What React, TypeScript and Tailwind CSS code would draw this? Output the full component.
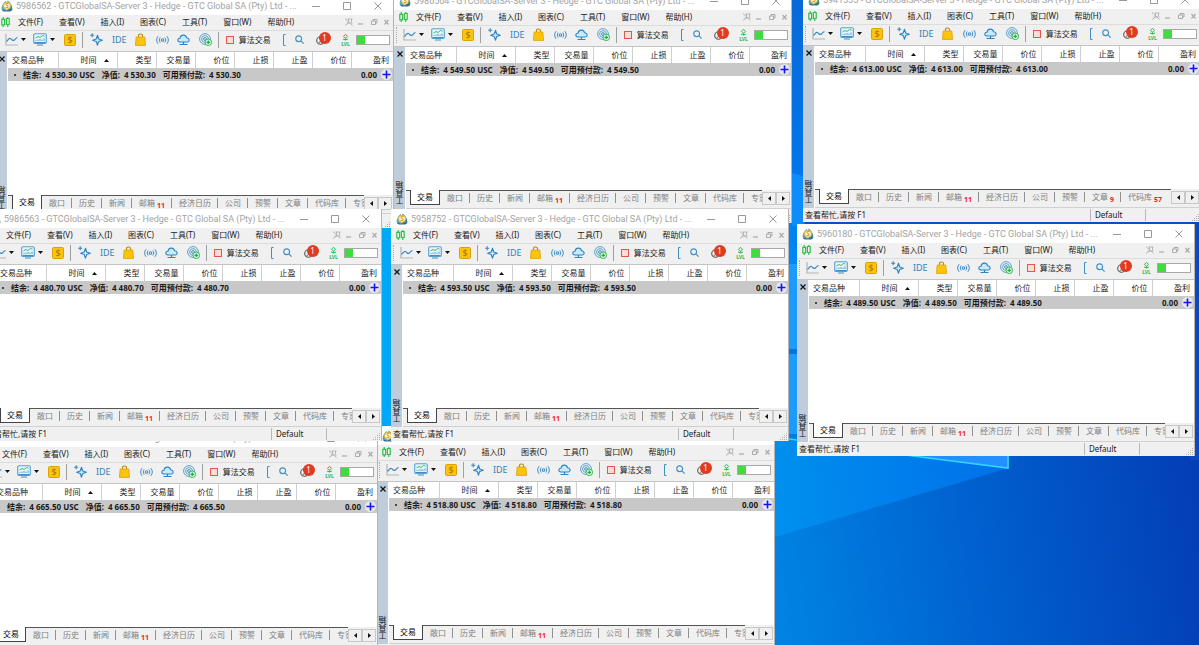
import React from "react";

type Tab = { label: string; count?: number };

type Terminal = {
  login: string;
  balance: string;
  position: string;
  tabs: Tab[];
};

const baseTabs: Tab[] = [
  { label: "敞口" },
  { label: "历史" },
  { label: "新闻" },
  { label: "邮箱", count: 11 },
  { label: "经济日历" },
  { label: "公司" },
  { label: "预警" },
  { label: "文章" },
  { label: "代码库" },
  { label: "专家" },
];

const countedTabs: Tab[] = [
  ...baseTabs.slice(0, 7),
  { label: "文章", count: 9 },
  { label: "代码库", count: 57 },
];

// listed back to front
const terminals: Terminal[] = [
  { login: "5958753", balance: "4 518.80", position: "left-[377px] top-[426px]", tabs: baseTabs },
  { login: "5986561", balance: "4 665.50", position: "left-[-20px] top-[428px]", tabs: baseTabs },
  { login: "5986562", balance: "4 530.30", position: "left-[-4px] top-[-4px]", tabs: baseTabs },
  { login: "5986564", balance: "4 549.50", position: "left-[394px] top-[-9px]", tabs: baseTabs },
  { login: "5941335", balance: "4 613.00", position: "left-[803px] top-[-10px]", tabs: countedTabs },
  { login: "5986563", balance: "4 480.70", position: "left-[-16px] top-[209px]", tabs: baseTabs },
  { login: "5958752", balance: "4 593.50", position: "left-[391px] top-[209px]", tabs: baseTabs },
  { login: "5960180", balance: "4 489.50", position: "left-[797px] top-[224px]", tabs: baseTabs },
];

const menuItems = ["文件(F)", "查看(V)", "插入(I)", "图表(C)", "工具(T)", "窗口(W)", "帮助(H)"];

const columns = [
  { label: "时间", width: "w-[59px]", sorted: true },
  { label: "类型", width: "w-[39px]" },
  { label: "交易量", width: "w-[39px]" },
  { label: "价位", width: "w-[39px]" },
  { label: "止损", width: "w-[39px]" },
  { label: "止盈", width: "w-[39px]" },
  { label: "价位", width: "w-[39px]" },
  { label: "盈利", width: "w-auto" },
];

const Wallpaper = () => (
  <svg
    className="absolute inset-0 h-full w-full"
    viewBox="0 0 1199 645"
    preserveAspectRatio="none"
    aria-hidden="true"
  >
    <defs>
      <linearGradient id="sky" x1="775" y1="560" x2="1199" y2="500" gradientUnits="userSpaceOnUse">
        <stop offset="0" stopColor="#0083e2" />
        <stop offset="0.45" stopColor="#0062d0" />
        <stop offset="1" stopColor="#043eb6" />
      </linearGradient>
      <linearGradient id="beam" x1="775" y1="500" x2="1009" y2="468" gradientUnits="userSpaceOnUse">
        <stop offset="0" stopColor="#0090ee" />
        <stop offset="1" stopColor="#0070ea" />
      </linearGradient>
      <linearGradient id="strip" x1="0" y1="0" x2="0" y2="264" gradientUnits="userSpaceOnUse">
        <stop offset="0" stopColor="#0869d8" />
        <stop offset="0.65" stopColor="#0276ea" />
        <stop offset="1" stopColor="#0088f8" />
      </linearGradient>
    </defs>
    <rect width="1199" height="645" fill="url(#sky)" />
    <path d="M775 537 1009 468 1009 440H775Z" fill="url(#beam)" />
    <rect x="789" width="16" height="264" fill="url(#strip)" />
    <path d="M792 173l11 3v50h-11Z" fill="#0d8cfb" />
    <rect x="789" y="264" width="8" height="170" fill="#1c9bff" />
    <rect x="789" y="349" width="8" height="5" fill="#0a72dc" />
    <rect x="805" y="215" width="394" height="15" fill="#0b4fc4" />
    <rect x="1190" y="215" width="9" height="245" fill="#0a49be" />
    <rect x="370" y="220" width="25" height="215" fill="#00a8f8" />
    <path d="M775 437 1008 468V440H775Z" fill="#2490ff" />
    <path d="M775 437 913 456 1008 468V440" fill="none" stroke="#2fd8ff" strokeWidth="1.6" />
  </svg>
);

const AppLogo = () => (
  <svg className="size-3 shrink-0" viewBox="0 0 12 12" aria-hidden="true">
    <path d="M5 .8C2.600 2.500.8 5.500.6 8.200c-.1 1.600.8 2.700 2.400 3L5 9.500Z" fill="#5aa9b8" />
    <path d="M6.500.6c2.500 1.400 4.700 5 4.900 7.900.1 1.900-1 2.900-3 3L6 9Z" fill="#3b8a78" />
    <path d="M1.200 9.700c3 .8 6.200.6 9.500-.8-.4 1.700-1.400 2.500-3 2.500H3.200c-1 0-1.800-.7-2-1.700Z" fill="#2f6e9a" />
    <circle cx="6" cy="5.800" r="3.500" fill="#fff7dc" stroke="#e0b13a" strokeWidth="1" />
    <text x="6" y="8.200" textAnchor="middle" fontSize="6.500" fontWeight="700" fill="#d89a1a">S</text>
  </svg>
);

const TitleBar = ({ login }: { login: string }) => (
  <header className="flex h-[19px] shrink-0 items-center bg-white pl-[5px] pr-[11px] text-[#a3a3a3]">
    <AppLogo />
    <h2 className="ml-[3px] grow truncate font-['Roboto',sans-serif] text-[9px] leading-3">
      {login} - GTCGlobalSA-Server 3 - Hedge - GTC Global SA (Pty) Ltd - ...
    </h2>
    <div className="flex gap-[23px]">
      <button aria-label="Minimize">
        <svg className="size-2" viewBox="0 0 8 8" stroke="#999" fill="none"><path d="M0 4.500H8" /></svg>
      </button>
      <button aria-label="Maximize">
        <svg className="size-2" viewBox="0 0 8 8" stroke="#999" fill="none"><path d="M.5.5h7v7h-7Z" /></svg>
      </button>
      <button aria-label="Close">
        <svg className="size-2" viewBox="0 0 8 8" stroke="#999" fill="none"><path d="M.5.5l7 7M7.500.5l-7 7" /></svg>
      </button>
    </div>
  </header>
);

const MenuBar = () => (
  <nav className="flex h-4 shrink-0 items-center border-b border-[#dcdcdc] bg-[#f0f0f0] pr-1 pb-0.5 pl-[5px]">
    <svg className="mr-2 h-2.5 w-[9px]" viewBox="0 0 9 10" fill="none" stroke="#2fc04a" strokeWidth="1.200" aria-hidden="true">
      <path d="M2.200 0v2M2.200 8v2M6.800 0v1.500M6.800 7.500V10" />
      <path d="M.8 2.300h2.800v5.500H.8ZM5.400 1.500h2.800v6H5.400Z" />
    </svg>
    <div className="flex grow gap-4">
      {menuItems.map((item) => (
        <button key={item} className="whitespace-nowrap">{item}</button>
      ))}
    </div>
    <svg className="h-2 w-11" viewBox="0 0 44 8" fill="none" stroke="#aaa" aria-hidden="true">
      <path d="M0 .5l7.500 7M2.500 1h5M3.500 1v3.500M6.500 1v3.500M1.500 5h6M0 7.500 3.500 5" strokeWidth=".8" />
      <path d="M13 6h5" strokeWidth="1.200" />
      <path d="M26.500 3h4v3.500h-4ZM28 3V1.500h4V5h-1.500" />
      <path d="M39.500 2l4 4.500M43.500 2l-4 4.500" strokeWidth="1.200" />
    </svg>
  </nav>
);

const Caret = () => (
  <svg className="h-[3px] w-[5px]" viewBox="0 0 5 3" aria-hidden="true"><path d="M0 0h5L2.500 3Z" fill="#111" /></svg>
);

const Toolbar = () => (
  <div className="flex h-[21px] shrink-0 items-center border-b border-[#c4c4c4] bg-[#f0f0f0] pb-[3px] pl-0.5">
    <div className="h-4 border-l border-dotted border-[#aaa]" />
    <button aria-label="Chart type" className="ml-1.5 flex items-center gap-[3px]">
      <svg className="h-3 w-[13px]" viewBox="0 0 13 12" fill="none">
        <path d="M1 0v11h12" stroke="#b4b4b4" strokeWidth="1.200" />
        <path d="M1.500 7.500C3 6 4 3.500 5.500 4.500S8 7.500 9.500 6s1.500-2 3-2.500" stroke="#3f8fc6" strokeWidth="1.200" />
      </svg>
      <Caret />
    </button>
    <button aria-label="Indicators" className="ml-[7px] flex items-center gap-[3px]">
      <svg className="h-[13px] w-3.5" viewBox="0 0 14 13" fill="none">
        <rect x=".7" y=".7" width="12.600" height="9.800" rx="1.200" fill="#e3f4fc" stroke="#5aa0cc" strokeWidth="1.100" />
        <path d="M1.500 9.500h11M4 12h6" stroke="#3f8fc6" strokeWidth="1.200" />
        <path d="M2.500 5 5 3.500l2 1 2.500-2 2 .6" stroke="#35b35b" strokeWidth=".9" />
        <path d="M3 8V7M5 8V6.500M7 8V6M9 8V6.500M11 8V5.500" stroke="#3f8fc6" strokeWidth=".8" />
      </svg>
      <Caret />
    </button>
    <button aria-label="New order" className="ml-[9px]">
      <svg className="size-3" viewBox="0 0 12 12" fill="none">
        <rect x=".5" y=".5" width="11" height="11" rx="1" fill="#fdc40c" stroke="#dba106" />
        <text x="6" y="9.200" textAnchor="middle" fontSize="9" fill="#9f7305">$</text>
      </svg>
    </button>
    <div className="ml-1.5 h-4 w-px bg-[#a0a0a0]" />
    <button aria-label="Assistant" className="ml-[7px]">
      <svg className="size-[13px]" viewBox="0 0 13 13" fill="none" stroke="#2f84c2">
        <path d="M7.500 2.200 8.700 6l3.700 1.200-3.700 1.300-1.200 3.700-1.300-3.700L2.600 7.200 6.200 6Z" fill="#c8ebfb" strokeWidth="1.100" strokeLinejoin="round" />
        <path d="M2.200.2v4M.2 2.200h4" strokeWidth="1.100" />
      </svg>
    </button>
    <button className="ml-[9px] text-[9px] leading-3 text-[#3182bd]">IDE</button>
    <button aria-label="Market" className="ml-2">
      <svg className="h-[13px] w-[11px]" viewBox="0 0 11 13" fill="none">
        <path d="M3.500 5V2.500C3.500.4 7.500.4 7.500 2.500V5" stroke="#b98a10" strokeWidth="1.100" />
        <path d="M1.200 4h8.600l.8 8.400H.4Z" fill="#fdc40c" stroke="#dba106" strokeWidth=".8" />
      </svg>
    </button>
    <button aria-label="Signals" className="ml-2.5">
      <svg className="h-3 w-[13px]" viewBox="0 0 13 12" fill="none" stroke="#3f8fc6">
        <circle cx="6.500" cy="6" r="1.300" strokeWidth="1.100" />
        <path d="M4.200 3.500c-1.200 1.400-1.200 3.600 0 5M8.800 3.500c1.200 1.400 1.200 3.600 0 5M2.200 2.200C.2 4.300.2 7.700 2.200 9.800M10.800 2.200c2 2.100 2 5.500 0 7.600" />
      </svg>
    </button>
    <button aria-label="VPS" className="ml-2">
      <svg className="h-3 w-[13px]" viewBox="0 0 13 12" fill="none" stroke="#2f84c2">
        <path d="M3 8C-.2 7.800.3 4.200 3 4.300 3.500.2 8.800.2 9.500 3.700c3.200-.1 3.700 4.100.5 4.300Z" fill="#c8ebfb" strokeWidth="1.100" />
        <path d="M6.500 8v2.500M2.500 10.500h8" strokeWidth="1.200" />
      </svg>
    </button>
    <button aria-label="Copy trading" className="ml-[9px]">
      <svg className="size-[13px]" viewBox="0 0 13 13" fill="none">
        <circle cx="6" cy="6" r="5.400" stroke="#5aa0cc" />
        <circle cx="6" cy="6" r="3.400" stroke="#5aa0cc" />
        <circle cx="6" cy="6" r="1.400" stroke="#3f8fc6" />
        <circle cx="9.300" cy="9.300" r="3.300" fill="#d9f7df" stroke="#35b85a" />
        <path d="M9.300 7.500v3.600M7.500 9.300h3.600" stroke="#22a648" strokeWidth="1.200" />
      </svg>
    </button>
    <div className="ml-1.5 h-4 w-px bg-[#a0a0a0]" />
    <button className="ml-[7px] flex items-center gap-[5px] whitespace-nowrap">
      <span className="size-2 border border-[#e2574c] bg-[#ffdcd8]" />
      算法交易
    </button>
    <svg className="ml-3 h-3 w-[3px]" viewBox="0 0 3 12" fill="none" stroke="#3f8fc6" aria-hidden="true"><path d="M2.500.5h-2v11h2" /></svg>
    <button aria-label="Search" className="ml-[9px]">
      <svg className="size-[9px]" viewBox="0 0 9 9" fill="none" stroke="#3f8fc6" strokeWidth="1.200"><circle cx="3.700" cy="3.700" r="2.900" /><path d="m5.900 5.900 2.700 2.700" /></svg>
    </button>
    <button aria-label="Notifications" className="relative ml-3 h-3 w-[15px]">
      <svg className="mt-0.5 size-[9px]" viewBox="0 0 9 9" fill="none" stroke="#555"><circle cx="4.500" cy="4.500" r="3.800" strokeWidth="1.100" /><path d="M3 7c.5-2 2.500-2 3.500 0" /></svg>
      <span className="absolute -top-0.5 right-0 size-3 rounded-full bg-[#e03a20] text-[8px] leading-3 text-white">1</span>
    </button>
    <button aria-label="Level" className="ml-2.5">
      <svg className="h-3 w-[9px] overflow-visible" viewBox="0 0 9 12" fill="none" stroke="#2fb552">
        <path d="M4.500.3 6.500 2.300 4.500 4.300 2.500 2.300ZM4.500 4.300v2M2 4.800c.5 1.200 4.500 1.200 5 0" />
        <text x="4.500" y="11.800" textAnchor="middle" fontSize="5" fontWeight="700" fill="#2fb552" stroke="none">LVL</text>
      </svg>
    </button>
    <div className="ml-1.5 h-2.5 w-[34px] border border-[#a8a8a8] bg-white">
      <div className="h-full w-1/4 bg-[#3fdc3f]" />
    </div>
  </div>
);

const TradeTable = ({ balance }: { balance: string }) => (
  <table className="w-full table-fixed border-collapse">
    <thead>
      <tr className="h-4 bg-white">
        <th className="w-[50px] border-r border-[#cfcfcf] pl-1 text-left font-normal whitespace-nowrap">交易品种</th>
        {columns.map((col, i) => (
          <th
            key={i}
            className={`${col.width} border-r border-[#cfcfcf] pr-1 text-right font-normal whitespace-nowrap last:border-r-0`}
          >
            {col.label}
            {col.sorted && (
              <svg className="mr-1 ml-[7px] inline h-[3px] w-[5px]" viewBox="0 0 5 3" aria-hidden="true"><path d="M0 3h5L2.500 0Z" fill="#111" /></svg>
            )}
          </th>
        ))}
      </tr>
    </thead>
    <tbody>
      <tr className="h-[13px] bg-[#c8c8c8] font-bold">
        <td colSpan={7} className="pl-1.5">
          <div className="flex items-center gap-[7px] whitespace-nowrap">
            <span className="size-0.5 rounded-full bg-[#1a1a1a]" />
            <span className="flex gap-1"><span>结余:</span><span>{balance} USC</span></span>
            <span className="flex gap-1"><span>净值:</span><span>{balance}</span></span>
            <span className="flex gap-1"><span>可用预付款:</span><span>{balance}</span></span>
          </div>
        </td>
        <td colSpan={2} className="pr-px">
          <div className="flex items-center justify-end gap-1">
            0.00
            <button aria-label="Deposit" className="rounded-full bg-[#e6e6f6]">
              <svg className="size-[11px]" viewBox="0 0 11 11" stroke="#1414f0" strokeWidth="1.600"><path d="M5.500 1.500v8M1.500 5.500h8" /></svg>
            </button>
          </div>
        </td>
      </tr>
    </tbody>
  </table>
);

const TabStrip = ({ tabs }: { tabs: Tab[] }) => (
  <div className="flex h-[19px] shrink-0 border-b border-[#d0d0d0] bg-[#f0f0f0] pr-px">
    <div className="flex h-[15px] min-w-0 grow overflow-hidden">
      <div className="w-1 shrink-0 border-t border-[#555]" />
      <button className="w-[30px] shrink-0 border border-t-0 border-[#444] bg-white text-black">交易</button>
      <div className="flex grow items-center border-t border-[#555] text-[#808080]">
        {tabs.map((tab, i) => (
          <button key={tab.label} className="flex h-3 shrink-0 items-center whitespace-nowrap">
            <span className="px-[7px]">
              {tab.label}
              {tab.count && <sub className="ml-0.5 text-[7px] font-bold text-[#f02020]">{tab.count}</sub>}
            </span>
            {i < tabs.length - 1 && <span className="-ml-px h-2.5 w-px bg-[#909090]" />}
          </button>
        ))}
      </div>
    </div>
    <div className="mt-0.5 flex h-[13px] shrink-0">
      <button aria-label="Scroll left" className="flex w-3.5 items-center justify-center border border-[#c8c8c8]">
        <svg className="h-[5px] w-[3px]" viewBox="0 0 3 5"><path d="M3 0v5L0 2.500Z" fill="#111" /></svg>
      </button>
      <button aria-label="Scroll right" className="flex w-3.5 items-center justify-center border border-[#c8c8c8]">
        <svg className="h-[5px] w-[3px]" viewBox="0 0 3 5"><path d="M0 0v5l3-2.500Z" fill="#111" /></svg>
      </button>
    </div>
  </div>
);

const StatusBar = () => (
  <footer className="flex h-3.5 shrink-0 items-center bg-[#f0f0f0] whitespace-nowrap">
    <span className="grow pl-0.5">查看帮忙,请按 F1</span>
    <span className="h-3 w-14 border-x border-[#b8b8b8] pl-1">Default</span>
    <svg className="ml-[46px] size-2 self-end" viewBox="0 0 8 8" fill="#b0b0b0" aria-hidden="true">
      <path d="M6 0h1v1H6ZM4 2h1v1H4ZM6 2h1v1H6ZM2 4h1v1H2ZM4 4h1v1H4ZM6 4h1v1H6ZM0 6h1v1H0ZM2 6h1v1H2ZM4 6h1v1H4ZM6 6h1v1H6Z" />
    </svg>
  </footer>
);

const TerminalWindow = ({ login, balance, position, tabs }: Terminal) => (
  <section className={`absolute ${position} flex h-[232px] w-[398px] flex-col border-r border-[#b5b5b5] bg-white`}>
    <TitleBar login={login} />
    <MenuBar />
    <Toolbar />
    <div className="flex min-h-0 grow">
      <aside className="flex w-[11px] shrink-0 flex-col items-center justify-between bg-[#bfcddb] pt-1 pb-1">
        <button aria-label="Close toolbox" className="flex">
          <svg className="size-1.5" viewBox="0 0 6 6" stroke="#111" strokeWidth="1.200"><path d="M.5.5l5 5M5.500.5l-5 5" /></svg>
        </button>
        <span className="rotate-180 text-[#222] [writing-mode:vertical-rl]">工具箱</span>
      </aside>
      <div className="flex min-w-0 grow flex-col pl-px">
        <div className="grow">
          <TradeTable balance={balance} />
        </div>
        <TabStrip tabs={tabs} />
      </div>
    </div>
    <StatusBar />
  </section>
);

export default function App() {
  return (
    <main className="relative h-screen overflow-hidden bg-[#0062d0] font-['Noto_Sans','Noto_Sans_CJK_SC',sans-serif] text-[8px] leading-3 text-[#1a1a1a]">
      <Wallpaper />
      {terminals.map((terminal) => (
        <TerminalWindow key={terminal.login} {...terminal} />
      ))}
    </main>
  );
}
